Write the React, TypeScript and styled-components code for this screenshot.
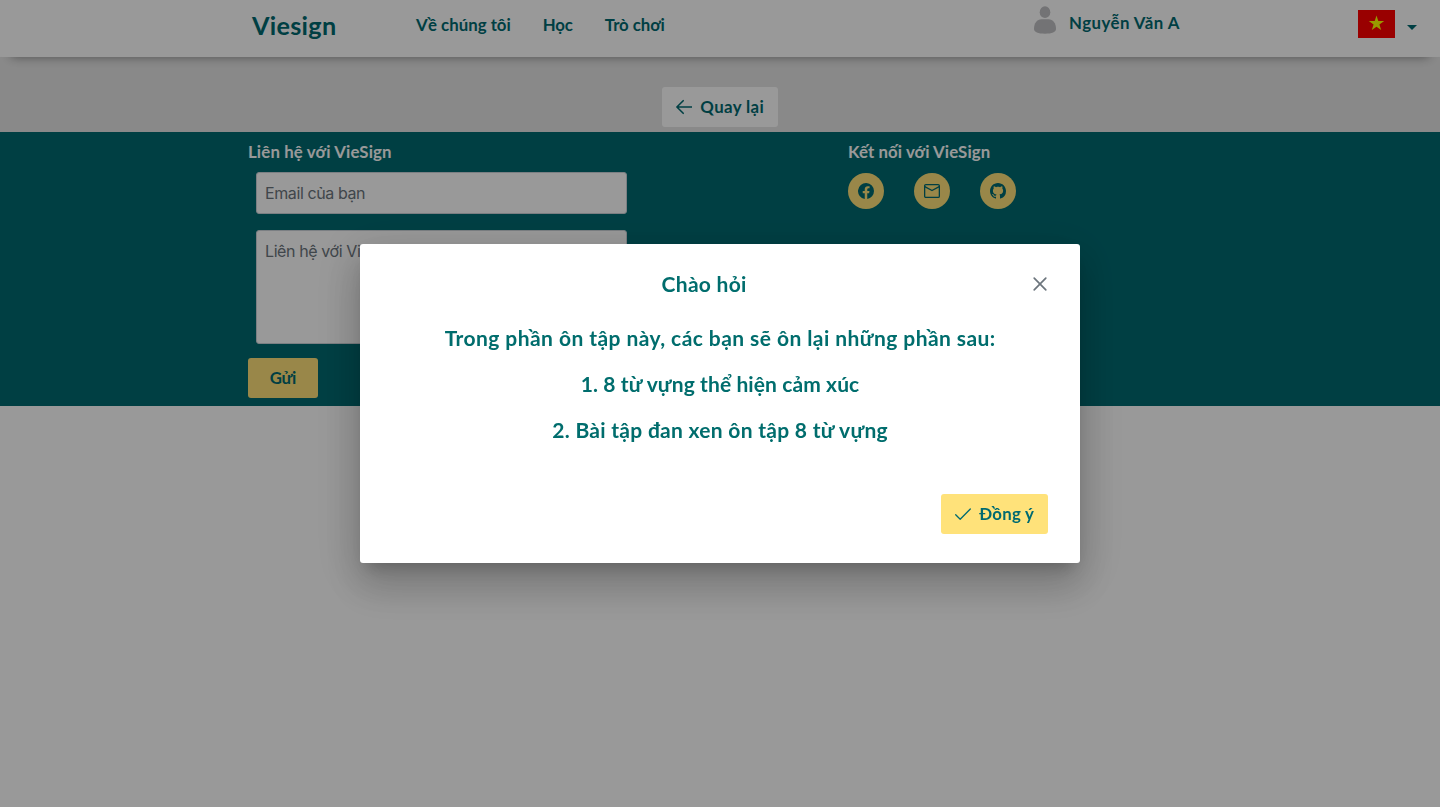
import React from "react";
import styled, { createGlobalStyle } from "styled-components";

const teal = "#006a71";
const yellow = "#ffe27a";

const GlobalStyle = createGlobalStyle`
  *, *::before, *::after { box-sizing: border-box; }
  body { margin: 0; background: #fff; font-family: Lato, "Open Sans", sans-serif; font-weight: 700; font-size: 16px; line-height: 24px; color: ${teal}; overflow: hidden; }
  h1, h2, p { margin: 0; font-size: inherit; font-weight: inherit; }
  button { font: inherit; color: inherit; border: 0; cursor: pointer; }
`;

const Label = styled.span<{ $spacing?: number }>`
  white-space: nowrap;
  font-size: 1.05em;
  letter-spacing: ${(p) => p.$spacing ?? 0}px;
  margin-right: ${(p) => -(p.$spacing ?? 0)}px;
`;

const Header = styled.header`
  position: relative;
  display: flex;
  height: 57px;
  padding: 0 23px 0 252px;
  background: #fff;
  border-radius: 3px;
  box-shadow: 0 11px 10px -11px rgba(0, 0, 0, 0.42);
`;

const Brand = styled.h1`
  width: 164px;
  padding-top: 9px;
  font-size: 24px;
  line-height: 32px;
`;

const Nav = styled.nav`
  display: flex;
  gap: 32px;
  padding-top: 13px;
`;

const Profile = styled.div`
  display: flex;
  gap: 10px;
  margin-left: auto;
  padding-top: 4px;
`;

const ProfileName = styled.div`
  width: 111px;
  padding-top: 7px;
`;

const Language = styled.div`
  display: flex;
  align-items: center;
  gap: 12px;
  height: 28px;
  margin: 10px 0 0 178px;
`;

const Caret = styled.i`
  margin-top: 6px;
  border: 5px solid transparent;
  border-top-color: ${teal};
  border-bottom: 0;
`;

const Banner = styled.section`
  display: flex;
  justify-content: center;
  height: 75px;
  padding-top: 30px;
  background: #e5e5e5;
`;

const Button = styled.button<{ $fill: string; $width: number }>`
  display: flex;
  align-items: center;
  justify-content: center;
  gap: 8px;
  width: ${(p) => p.$width}px;
  height: 40px;
  padding: 0;
  border-radius: 3px;
  background: ${(p) => p.$fill};
`;

const Footer = styled.footer`
  display: grid;
  grid-template-columns: 600px 1fr;
  height: 274px;
  padding: 8px 0 8px 248px;
  background: ${teal};
`;

const FooterTitle = styled.h2`
  height: 24px;
  color: #fff;
`;

const ContactForm = styled.form`
  display: flex;
  flex-direction: column;
  align-items: flex-start;
`;

const Field = styled.input`
  width: 371px;
  height: 42px;
  margin: 8px 0 16px 8px;
  padding: 8px;
  border: 1px solid #ced4da;
  border-radius: 3px;
  background: #fff;
  font: 400 16px/24px Inter, Roboto, sans-serif;
  letter-spacing: -0.4px;
  &::placeholder { color: #6c757d; opacity: 1; }
`;

const Message = styled(Field)`
  height: 114px;
  margin: 0 0 14px 8px;
  resize: none;
`;

const SocialList = styled.div`
  display: flex;
  gap: 30px;
  margin-top: 9px;
`;

const SocialLink = styled.a`
  display: grid;
  place-items: center;
  width: 36px;
  height: 36px;
  border-radius: 50%;
  background: ${yellow};
`;

const Mask = styled.div`
  position: fixed;
  inset: 0;
  display: flex;
  align-items: center;
  justify-content: center;
  background: rgba(0, 0, 0, 0.4);
`;

const Dialog = styled.div`
  display: flex;
  flex-direction: column;
  width: 720px;
  height: 319px;
  border-radius: 3px;
  background: #fff;
  box-shadow: 0 11px 15px -7px rgba(0, 0, 0, 0.2), 0 24px 38px 3px rgba(0, 0, 0, 0.14), 0 9px 46px 8px rgba(0, 0, 0, 0.12);
  color: #006d6d;
  font-size: 20px;
`;

const DialogHeader = styled.div`
  display: flex;
  align-items: center;
  height: 80px;
  padding: 0 24px;
`;

const DialogTitle = styled.h2`
  flex: 1;
  padding-bottom: 1px;
  text-align: center;
`;

const CloseButton = styled.button`
  display: grid;
  place-items: center;
  width: 32px;
  height: 32px;
  padding: 0;
  background: none;
`;

const DialogBody = styled.div`
  display: flex;
  flex-direction: column;
  gap: 16px;
  margin-top: -1px;
  text-align: center;
  line-height: 30px;

  p { height: 30px; }
`;

const DialogFooter = styled.div`
  display: flex;
  justify-content: flex-end;
  margin-top: auto;
  padding: 0 32px 29px;
  font-size: 16px;
  line-height: 24px;
  color: ${teal};
`;

const Avatar = () => (
  <svg width="28" height="32" viewBox="0 0 28 32">
    <defs>
      <filter id="soft"><feGaussianBlur stdDeviation=".5" /></filter>
    </defs>
    <g fill="#c0c0c3" filter="url(#soft)">
      <ellipse cx="14" cy="8.2" rx="5.300" ry="5.900" />
      <path d="M3 25c0-6 3-9.800 7.500-9.800h7C22 15.200 25 19 25 25c0 3-4 4.700-11 4.700S3 28 3 25Z" />
    </g>
  </svg>
);

const Flag = () => (
  <svg width="37" height="28" viewBox="0 0 37 28">
    <path fill="red" d="M0 0h37v28H0z" />
    <path fill="#ff0" d="m18.500 5.500 1.800 5.600h5.900l-4.800 3.400 1.800 5.600-4.700-3.400-4.700 3.400 1.800-5.600-4.800-3.400h5.900z" />
  </svg>
);

const ArrowLeft = () => (
  <svg width="16" height="16" viewBox="0 0 16 16" fill="none" stroke="currentColor" strokeWidth="1.600" strokeLinecap="round" strokeLinejoin="round">
    <path d="M15.500 8H1M7.200 1.700.9 8l6.300 6.300" />
  </svg>
);

const Check = () => (
  <svg width="16" height="16" viewBox="0 0 16 16" fill="none" stroke="currentColor" strokeWidth="1.300" strokeLinecap="round" strokeLinejoin="round">
    <path d="m.7 8.700 4.500 4.500L15.300 3" />
  </svg>
);

const Close = () => (
  <svg width="16" height="16" viewBox="0 0 16 16" fill="none" stroke="#6c757d" strokeWidth="1.700" strokeLinecap="round">
    <path d="m2.200 2.200 11.600 11.600m0-11.600L2.200 13.800" />
  </svg>
);

const Facebook = () => (
  <svg width="16" height="16" viewBox="0 0 16 16" fill={teal}>
    <path d="M16 8.050A8 8 0 1 0 6.750 15.950v-5.600H4.720V8.050h2.030V6.280c0-2 1.200-3.120 3.020-3.120.88 0 1.790.16 1.790.16v1.970h-1c-1 0-1.310.62-1.310 1.250v1.510h2.220l-.36 2.300H9.250v5.600A8 8 0 0 0 16 8.050Z" />
  </svg>
);

const Mail = () => (
  <svg width="16" height="16" viewBox="0 0 16 16" fill="none" stroke={teal} strokeWidth="1.300" strokeLinejoin="round">
    <rect x=".65" y="1.650" width="14.700" height="12.700" rx="1.200" />
    <path d="M.8 3.600 8 7.500l7.200-3.900" />
  </svg>
);

const Github = () => (
  <svg width="16" height="16" viewBox="0 0 16 16" fill={teal}>
    <path d="M8 0C3.580 0 0 3.580 0 8c0 3.540 2.290 6.530 5.470 7.590.4.070.55-.17.55-.38 0-.19-.01-.82-.01-1.490-2.010.37-2.530-.49-2.690-.94-.09-.23-.48-.94-.82-1.130-.28-.15-.68-.52-.01-.53.63-.01 1.080.58 1.230.82.72 1.210 1.870.87 2.330.66.07-.52.28-.87.51-1.070-1.780-.2-3.640-.89-3.640-3.950 0-.87.31-1.590.82-2.150-.08-.2-.36-1.020.08-2.120 0 0 .67-.21 2.200.82.64-.18 1.320-.27 2-.27s1.360.09 2 .27c1.530-1.040 2.200-.82 2.200-.82.44 1.100.16 1.920.08 2.120.51.56.82 1.270.82 2.150 0 3.070-1.870 3.750-3.650 3.950.29.25.54.73.54 1.480 0 1.070-.01 1.930-.01 2.200 0 .21.15.46.55.38A8 8 0 0 0 16 8c0-4.420-3.580-8-8-8Z" />
  </svg>
);

export default function App() {
  return (
    <>
      <GlobalStyle />
      <Header>
        <Brand><Label $spacing={0.3}>Viesign</Label></Brand>
        <Nav>
          <Label $spacing={0.03}>Về chúng tôi</Label>
          <Label $spacing={-0.2}>Học</Label>
          <Label $spacing={-0.05}>Trò chơi</Label>
        </Nav>
        <Profile>
          <Avatar />
          <ProfileName><Label $spacing={0.48}>Nguyễn Văn A</Label></ProfileName>
        </Profile>
        <Language><Flag /><Caret /></Language>
      </Header>
      <Banner>
        <Button $fill="#fff" $width={116}><ArrowLeft /><Label $spacing={0.38}>Quay lại</Label></Button>
      </Banner>
      <Footer>
        <ContactForm>
          <FooterTitle><Label $spacing={0.15}>Liên hệ với VieSign</Label></FooterTitle>
          <Field placeholder="Email của bạn" />
          <Message as="textarea" placeholder="Liên hệ với VieSign" />
          <Button type="button" $fill={yellow} $width={70}><Label $spacing={-0.4}>Gửi</Label></Button>
        </ContactForm>
        <div>
          <FooterTitle><Label $spacing={0.1}>Kết nối với VieSign</Label></FooterTitle>
          <SocialList>
            <SocialLink><Facebook /></SocialLink>
            <SocialLink><Mail /></SocialLink>
            <SocialLink><Github /></SocialLink>
          </SocialList>
        </div>
      </Footer>
      <Mask>
        <Dialog role="dialog">
          <DialogHeader>
            <DialogTitle><Label $spacing={0.28}>Chào hỏi</Label></DialogTitle>
            <CloseButton aria-label="Đóng"><Close /></CloseButton>
          </DialogHeader>
          <DialogBody>
            <p><Label $spacing={0.43}>Trong phần ôn tập này, các bạn sẽ ôn lại những phần sau:</Label></p>
            <p><Label $spacing={0.1}>1. 8 từ vựng thể hiện cảm xúc</Label></p>
            <p><Label $spacing={0.28}>2. Bài tập đan xen ôn tập 8 từ vựng</Label></p>
          </DialogBody>
          <DialogFooter>
            <Button $fill={yellow} $width={107}><Check /><Label $spacing={0.25}>Đồng ý</Label></Button>
          </DialogFooter>
        </Dialog>
      </Mask>
    </>
  );
}
